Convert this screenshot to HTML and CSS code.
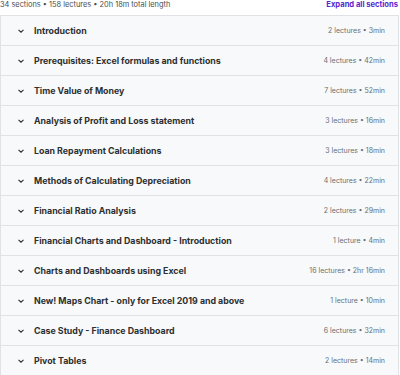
FILE: index.html
```html
<!DOCTYPE html>
<html lang="en">
<head>
  <meta charset="UTF-8" />
  <meta name="viewport" content="width=device-width, initial-scale=1.0" />
  <title>Course content</title>
  <link rel="stylesheet" href="styles.css">
</head>
<body>
  <div class="summary">
    <span class="stats">34 sections • 158 lectures • 20h 18m total length</span>
    <button class="expand">Expand all sections</button>
  </div>

  <div class="sections">
    <div class="section"><span class="chev"><svg viewBox="0 0 10 10"><path d="M2.5 3.8 5 6.2 7.5 3.8"/></svg></span><span class="title">Introduction</span><span class="meta">2 lectures • 3min</span></div>
    <div class="section"><span class="chev"><svg viewBox="0 0 10 10"><path d="M2.5 3.8 5 6.2 7.5 3.8"/></svg></span><span class="title">Prerequisites: Excel formulas and functions</span><span class="meta">4 lectures • 42min</span></div>
    <div class="section"><span class="chev"><svg viewBox="0 0 10 10"><path d="M2.5 3.8 5 6.2 7.5 3.8"/></svg></span><span class="title">Time Value of Money</span><span class="meta">7 lectures • 52min</span></div>
    <div class="section"><span class="chev"><svg viewBox="0 0 10 10"><path d="M2.5 3.8 5 6.2 7.5 3.8"/></svg></span><span class="title">Analysis of Profit and Loss statement</span><span class="meta">3 lectures • 16min</span></div>
    <div class="section"><span class="chev"><svg viewBox="0 0 10 10"><path d="M2.5 3.8 5 6.2 7.5 3.8"/></svg></span><span class="title">Loan Repayment Calculations</span><span class="meta">3 lectures • 18min</span></div>
    <div class="section"><span class="chev"><svg viewBox="0 0 10 10"><path d="M2.5 3.8 5 6.2 7.5 3.8"/></svg></span><span class="title">Methods of Calculating Depreciation</span><span class="meta">4 lectures • 22min</span></div>
    <div class="section"><span class="chev"><svg viewBox="0 0 10 10"><path d="M2.5 3.8 5 6.2 7.5 3.8"/></svg></span><span class="title">Financial Ratio Analysis</span><span class="meta">2 lectures • 29min</span></div>
    <div class="section"><span class="chev"><svg viewBox="0 0 10 10"><path d="M2.5 3.8 5 6.2 7.5 3.8"/></svg></span><span class="title">Financial Charts and Dashboard - Introduction</span><span class="meta">1 lecture • 4min</span></div>
    <div class="section"><span class="chev"><svg viewBox="0 0 10 10"><path d="M2.5 3.8 5 6.2 7.5 3.8"/></svg></span><span class="title">Charts and Dashboards using Excel</span><span class="meta">16 lectures • 2hr 16min</span></div>
    <div class="section"><span class="chev"><svg viewBox="0 0 10 10"><path d="M2.5 3.8 5 6.2 7.5 3.8"/></svg></span><span class="title">New! Maps Chart - only for Excel 2019 and above</span><span class="meta">1 lecture • 10min</span></div>
    <div class="section"><span class="chev"><svg viewBox="0 0 10 10"><path d="M2.5 3.8 5 6.2 7.5 3.8"/></svg></span><span class="title">Case Study - Finance Dashboard</span><span class="meta">6 lectures • 32min</span></div>
    <div class="section"><span class="chev"><svg viewBox="0 0 10 10"><path d="M2.5 3.8 5 6.2 7.5 3.8"/></svg></span><span class="title">Pivot Tables</span><span class="meta">2 lectures • 14min</span></div>
  </div>
</body>
</html>
```

FILE: styles.css
```css
:root {
  --ink: #2d2f31;
  --muted: #6a6f73;
  --line: #dfe3e6;
  --row-bg: #f7f9fa;
  --purple: #5624d0;
  --font-family: Inter, "Noto Sans", sans-serif;
}

body {
  margin: 0;
  font-family: var(--font-family);
  color: var(--ink);
  background: #fff;
  width: 400px;
}

.summary {
  display: flex;
  justify-content: space-between;
  align-items: center;
  height: 15px;
  margin-top: -3px;
  padding-right: 2px;
}

.stats {
  font-size: 7.4px;
  color: #4a4d50;
}

.expand {
  border: none;
  background: none;
  padding: 0;
  font-family: inherit;
  font-size: 7.6px;
  font-weight: 700;
  color: var(--purple);
  cursor: pointer;
}

.sections {
  margin-top: 3px;
  margin-right: 1px;
  border: 1px solid var(--line);
  border-bottom: none;
}

.section {
  display: flex;
  align-items: center;
  height: 29px;
  padding: 0 13px 0 15px;
  background: var(--row-bg);
  border-bottom: 1px solid var(--line);
}

.chev {
  display: flex;
  width: 10px;
  height: 10px;
  margin-right: 8px;
}

.chev svg {
  width: 10px;
  height: 10px;
  fill: none;
  stroke: var(--ink);
  stroke-width: 1.1;
}

.title {
  flex: 1;
  font-size: 8.8px;
  font-weight: 700;
}

.meta {
  font-size: 7px;
  color: var(--muted);
}
```
